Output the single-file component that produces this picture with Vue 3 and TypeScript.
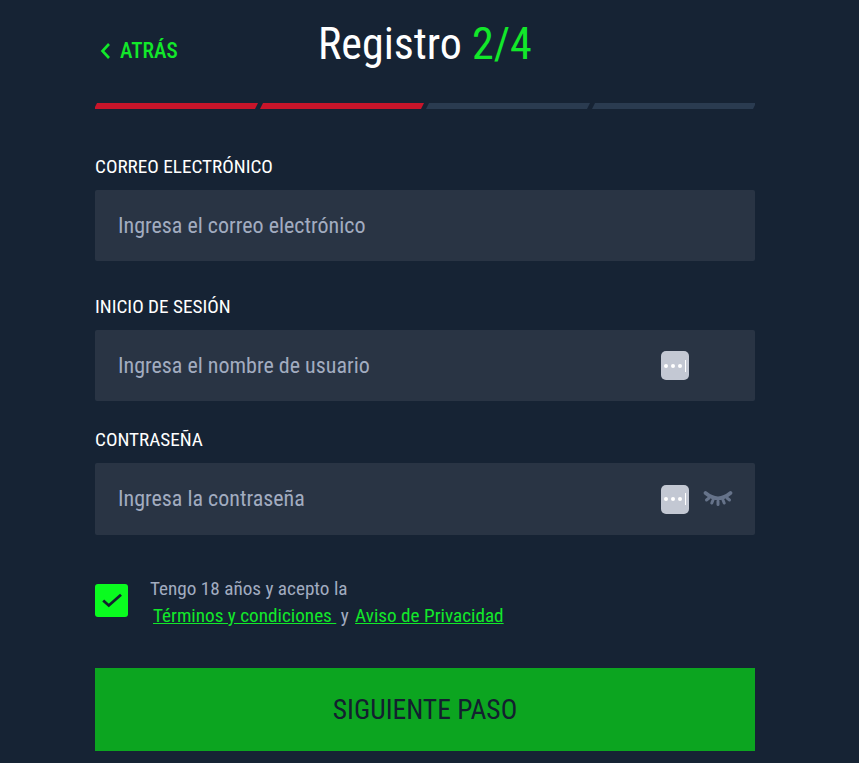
<template>
  <div class="page">
    <header class="head">
      <a class="back">
        <svg class="back-icon" width="11" height="18" viewBox="0 0 11 18"><path d="M9 2 L2.5 9 L9 16" fill="none" stroke="currentColor" stroke-width="2.6" /></svg>
        <span>ATRÁS</span>
      </a>
      <h1 class="title">Registro <em>2/4</em></h1>
    </header>

    <div class="steps">
      <i v-for="n in 4" :key="n" class="step" :class="{ on: n <= 2 }"></i>
    </div>

    <div v-for="f in fields" :key="f.label" class="field" :class="f.cls">
      <div class="label">{{ f.label }}</div>
      <div class="input">
        <span class="placeholder">{{ f.placeholder }}</span>
        <span v-if="f.dots" class="dots"><b></b><b></b><b></b><u></u></span>
        <svg v-if="f.eye" class="eye" width="30" height="18" viewBox="0 0 30 18">
          <g fill="none" stroke="#66738a" stroke-linecap="round">
            <path d="M2.5 3 Q15 13.5 27.5 3" stroke-width="3.6" />
            <path d="M6 8 L3.5 10 M10 10 L8.8 13 M15 11 L15 14.5 M20 10 L21.2 13 M24 8 L26.5 10" stroke-width="3" />
          </g>
        </svg>
      </div>
    </div>

    <div class="terms">
      <span class="check">
        <svg width="20" height="16" viewBox="0 0 20 16"><path d="M1.2 7.5 L6.8 12.5 L19 1.8" fill="none" stroke="#13202f" stroke-width="2.8" /></svg>
      </span>
      <div class="terms-text">
        <div>Tengo 18 años y acepto la</div>
        <div class="links"><a>Términos y condiciones&nbsp;</a> <span class="and">y</span> <a>Aviso de Privacidad</a></div>
      </div>
    </div>

    <button class="next">SIGUIENTE PASO</button>
  </div>
</template>

<script setup lang="ts">
const fields = [
  { label: "CORREO ELECTRÓNICO", placeholder: "Ingresa el correo electrónico", dots: false, eye: false, cls: "f1" },
  { label: "INICIO DE SESIÓN", placeholder: "Ingresa el nombre de usuario", dots: true, eye: false, cls: "f2" },
  { label: "CONTRASEÑA", placeholder: "Ingresa la contraseña", dots: true, eye: true, cls: "f3" },
];
</script>

<style scoped>
.page {
  width: 660px;
  height: 763px;
  margin-left: 95px;
  overflow: hidden;
  font-family: "Roboto", "Liberation Sans", sans-serif;
  font-stretch: condensed;
}
.head {
  position: relative;
  height: 103px;
}
.back {
  position: absolute;
  left: 5px;
  top: 38px;
  display: flex;
  align-items: center;
  gap: 9px;
  color: #12e82a;
  font-size: 21.2px;
  font-weight: 500;
}
.title {
  margin: 0;
  padding: 18px 0 0 223px;
  font-size: 44px;
  line-height: 52px;
  font-weight: 400;
  color: #fff;
}
.title em {
  font-style: normal;
  color: #12e82a;
}
.steps {
  display: flex;
  gap: 2px;
  height: 6px;
  margin: 0 -1px;
}
.step {
  flex: 1;
  background: #2a3b50;
  clip-path: polygon(3px 0, 100% 0, calc(100% - 3px) 100%, 0 100%);
}
.step.on {
  background: #c8152a;
}
.field .label {
  color: #fff;
  font-size: 19.2px;
  line-height: 24px;
  font-weight: 400;
}
.f1 { margin-top: 46px; }
.f2 { margin-top: 34px; }
.f3 { margin-top: 27px; }
.label { height: 35px; }
.input {
  height: 71px;
  display: flex;
  align-items: center;
  padding-left: 23px;
  background: #293444;
  border-radius: 2px;
}
.f3 .input { height: 72px; }
.placeholder {
  flex: 1;
  color: #a2acc0;
  font-size: 22px;
}
.f3 .placeholder { margin-top: -2px; }
.dots {
  position: relative;
  display: flex;
  align-items: center;
  gap: 3px;
  width: 28px;
  height: 29px;
  padding-left: 3px;
  box-sizing: border-box;
  margin-right: 66px;
  background: #c3c8d3;
  border-radius: 5px;
}
.dots b {
  width: 4px;
  height: 4px;
  border-radius: 50%;
  background: #fff;
}
.dots u {
  width: 1px;
  height: 12px;
  background: #fff;
}
.f3 .dots { margin-right: 14px; }
.eye { margin-right: 22px; }
.terms {
  display: flex;
  margin-top: 40px;
}
.check {
  display: flex;
  align-items: center;
  justify-content: center;
  width: 33px;
  height: 33px;
  margin-top: 9px;
  background: #0afc1f;
  border-radius: 3px;
}
.terms-text {
  margin-left: 22px;
  color: #a2acc0;
  font-size: 19.2px;
  line-height: 27px;
}
.links { padding-left: 3px; }
.links a {
  color: #12e82a;
  text-decoration: underline;
}
.links .and { margin-right: 2px; }
.next {
  display: block;
  width: 660px;
  height: 83px;
  margin-top: 39px;
  border: 0;
  padding: 0;
  background: #0ca520;
  color: #13202f;
  font-family: inherit;
  font-stretch: inherit;
  font-size: 27.5px;
  text-align: center;
}
</style>

<style>
body {
  background: #162334;
}
</style>
